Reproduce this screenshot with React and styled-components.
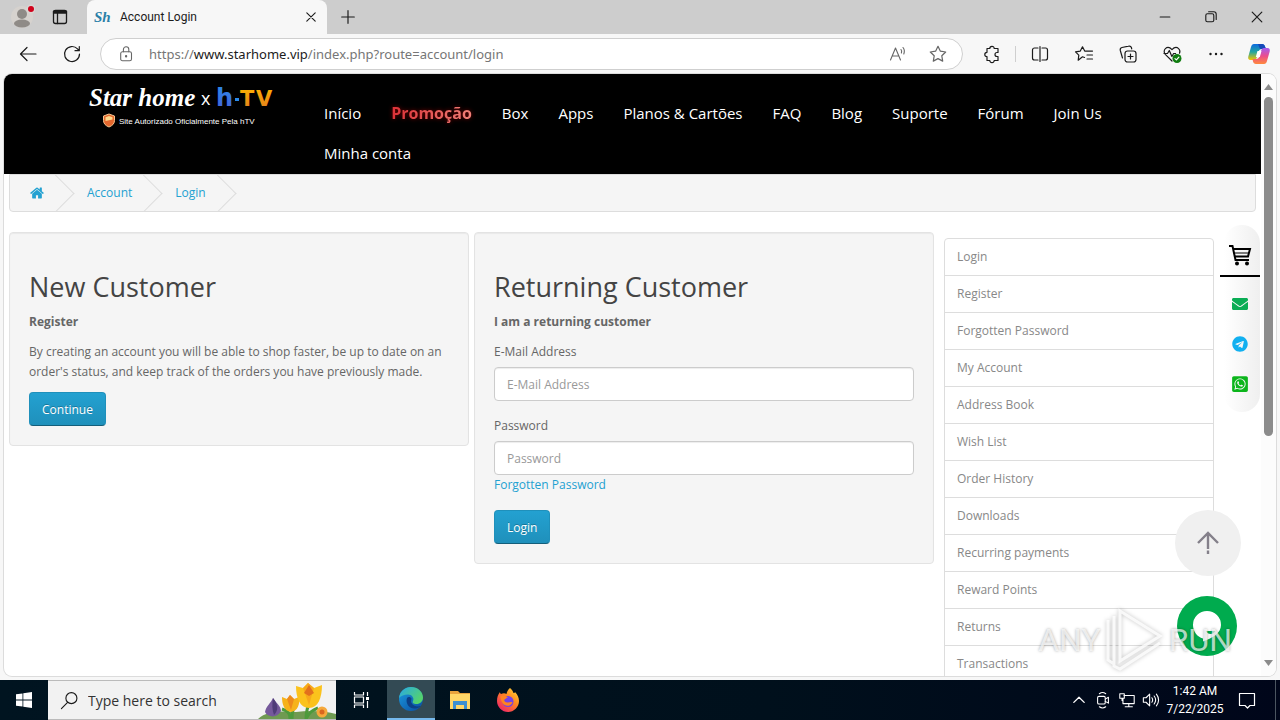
import React from "react";
import styled, { createGlobalStyle, css } from "styled-components";
import { FaEnvelope, FaTelegram, FaWhatsappSquare } from "react-icons/fa";

const Color = {
  LINK: "#23a1d1",
  TEXT: "#666",
  MUTED: "#888",
  HEADING: "#444",
  PANEL: "#f5f5f5",
  BORDER: "#ddd",
  CHROME: "#f7f7f7",
  STRIP: "#cdcdcd",
  TASKBAR: "#001420",
};

const UI_FONT = `"Open Sans", "Noto Sans", sans-serif`;

const GlobalStyle = createGlobalStyle`
  * {
    box-sizing: border-box;
  }

  body {
    margin: 0;
    font-family: ${UI_FONT};
    font-size: 12px;
    line-height: 20px;
    color: ${Color.TEXT};
  }

  a {
    color: ${Color.LINK};
    text-decoration: none;
  }

  button,
  input {
    font-family: inherit;
  }

  svg {
    display: block;
    flex: none;
  }
`;

const Desktop = styled.div`
  display: flex;
  flex-direction: column;
  height: 100vh;
  overflow: hidden;
  background: ${Color.CHROME};
`;

/* ---------- browser chrome ---------- */

const IconButton = styled.button`
  display: flex;
  align-items: center;
  justify-content: center;
  flex: none;
  width: ${({ $width }) => $width || 44}px;
  height: 32px;
  padding: 0;
  border: 0;
  background: none;
  color: ${({ $color }) => $color || "#1b1b1b"};
`;

const TabStrip = styled.div`
  display: flex;
  align-items: center;
  flex: none;
  height: 34px;
  padding-left: 3px;
  background: ${Color.STRIP};
`;

const Tab = styled.div`
  display: flex;
  align-items: center;
  align-self: stretch;
  width: 240px;
  margin-left: 8px;
  padding: 0 4px 0 7px;
  border-radius: 8px 8px 0 0;
  background: ${Color.CHROME};
  color: #1b1b1b;
  font-family: Roboto, sans-serif;
`;

const Favicon = styled.span`
  width: 26px;
  color: #2b80a8;
  font: italic bold 15px "Liberation Serif", serif;
`;

const TabTitle = styled.span`
  flex: 1;
`;

const WindowButtons = styled.div`
  display: flex;
  margin-left: auto;
`;

const Toolbar = styled.div`
  display: flex;
  align-items: center;
  flex: none;
  height: 40px;
  padding-left: 6px;
`;

const AddressBar = styled.div`
  display: flex;
  align-items: center;
  flex: 1;
  height: 32px;
  margin: 0 7px 0 6px;
  padding: 0 4px;
  border: 1px solid #cfcfcf;
  border-radius: 16px;
  background: #fff;
`;

const Url = styled.div`
  flex: 1;
  color: #767676;
  font-family: "Noto Sans", sans-serif;
  font-size: 13px;

  b {
    font-weight: 400;
    color: #1b1b1b;
  }
`;

const Separator = styled.div`
  width: 1px;
  height: 16px;
  margin: 0 2px 0 1px;
  background: #cfcfcf;
`;

/* ---------- page ---------- */

const Frame = styled.div`
  position: relative;
  display: flex;
  flex: 1;
  min-height: 0;
  margin: 0 4px 4px;
  border-radius: 8px;
  box-shadow: 0 0 0 1px #dcdcdc;
  background: #fff;
  overflow: hidden;
`;

const Site = styled.div`
  flex: 1;
  min-width: 0;
  overflow: hidden;
`;

const Header = styled.header`
  display: flex;
  align-items: flex-start;
  padding-right: 60px;
  background: #000;
`;

const Brand = styled.a`
  flex: none;
  width: 305px;
  padding: 6px 0 0 80px;
`;

const Nav = styled.nav`
  display: flex;
  flex-wrap: wrap;
  padding: 19px 0 1px;
`;

const NavLink = styled.a`
  padding: 0 15px;
  color: #fff;
  font-size: 15px;
  line-height: 40px;

  ${({ $promo }) =>
    $promo &&
    css`
      font-size: 16px;
      font-weight: 700;

      span {
        background: linear-gradient(90deg, #dc3036, #f08078);
        background-clip: text;
        color: transparent;
        filter: drop-shadow(0 0 2px rgba(190, 0, 0, 0.6));
      }
    `}
`;

const Breadcrumb = styled.ul`
  display: flex;
  gap: 3px;
  margin: 0 5px 20px;
  padding: 8px 0;
  border: 1px solid ${Color.BORDER};
  border-radius: 0 0 4px 4px;
  background: ${Color.PANEL};
  list-style: none;
  overflow: hidden;
`;

const Crumb = styled.li`
  position: relative;
  display: flex;
  align-items: center;
  height: 20px;
  padding: 0 20px;

  &:after {
    content: "";
    position: absolute;
    top: -3px;
    right: -5px;
    width: 26px;
    height: 26px;
    border-right: 1px solid ${Color.BORDER};
    border-bottom: 1px solid ${Color.BORDER};
    transform: rotate(-45deg);
  }
`;

const Main = styled.main`
  display: flex;
  align-items: flex-start;
  margin: 0 47px 0 5px;
`;

const Well = styled.section`
  flex: 1;
  margin-right: ${({ $gap }) => $gap}px;
  padding: 19px;
  border: 1px solid #e3e3e3;
  border-radius: 4px;
  background: ${Color.PANEL};
  box-shadow: inset 0 1px 1px rgba(0, 0, 0, 0.05);

  h2 {
    margin: 20px 0 10px;
    color: ${Color.HEADING};
    font-size: 27px;
    font-weight: 400;
    line-height: 30px;
  }

  p {
    margin: 0 0 10px;
  }
`;

const Field = styled.div`
  margin-bottom: 15px;

  label {
    display: block;
    margin-bottom: 5px;
  }

  a {
    display: block;
  }
`;

const Input = styled.input`
  display: block;
  width: 100%;
  height: 34px;
  padding: 6px 12px;
  border: 1px solid #ccc;
  border-radius: 4px;
  background: #fff;
  box-shadow: inset 0 1px 1px rgba(0, 0, 0, 0.075);
  font-size: 12px;

  &::placeholder {
    color: #999;
    opacity: 1;
  }
`;

const PrimaryButton = styled.button`
  display: block;
  height: 34px;
  padding: 0 12px;
  border: 1px solid #1f90bb;
  border-bottom-color: #145e7a;
  border-radius: 4px;
  background: linear-gradient(#23a1d1, #1f90bb);
  color: #fff;
  font-size: 12px;
  text-shadow: 0 -1px 0 rgba(0, 0, 0, 0.25);
`;

const AccountMenu = styled.nav`
  display: flex;
  flex-direction: column;
  flex: none;
  width: 270px;
  margin-top: 6px;
  border: 1px solid ${Color.BORDER};
  border-radius: 4px;
`;

const AccountLink = styled.a`
  padding: 8px 12px;
  color: ${Color.MUTED};

  & + & {
    border-top: 1px solid ${Color.BORDER};
  }
`;

const Scrollbar = styled.div`
  display: flex;
  flex-direction: column;
  align-items: center;
  flex: none;
  width: 15px;
  padding: 10px 0;
  background: #fcfcfc;
`;

const ScrollTrack = styled.div`
  flex: 1;
  width: 9px;
  margin: 7px 0;
`;

const ScrollThumb = styled.div`
  height: 61%;
  border-radius: 5px;
  background: #8b8b8b;
`;

const ContactRail = styled.aside`
  position: absolute;
  top: 151px;
  right: 16px;
  display: flex;
  flex-direction: column;
  align-items: flex-end;
  width: 36px;
  padding-bottom: 8px;
  border-radius: 18px;
  background: linear-gradient(90deg, #fff, #efefef);
`;

const RailLink = styled.a`
  display: flex;
  align-items: center;
  justify-content: center;
  width: 40px;
  height: 40px;
  color: ${({ $color }) => $color};
`;

const CartLink = styled(RailLink)`
  height: 52px;
  margin-bottom: 7px;
  padding-top: 10px;
  border-bottom: 2px solid #000;
`;

const RoundButton = styled.button`
  position: absolute;
  right: ${({ $right }) => $right}px;
  bottom: ${({ $bottom }) => $bottom}px;
  display: flex;
  align-items: center;
  justify-content: center;
  width: ${({ $size }) => $size}px;
  height: ${({ $size }) => $size}px;
  padding: 0;
  border: 0;
  border-radius: 50%;
  background: ${({ $background }) => $background};
`;

const Watermark = styled.div`
  position: absolute;
  right: 44px;
  bottom: 4px;
  display: flex;
  align-items: center;
  gap: 4px;
  color: rgba(255, 255, 255, 0.7);
  font: 32px Roboto, sans-serif;
  text-shadow: 0 0 3px rgba(0, 0, 0, 0.35);
  pointer-events: none;

  svg {
    filter: drop-shadow(0 0 2px rgba(0, 0, 0, 0.3));
  }
`;

/* ---------- taskbar ---------- */

const Taskbar = styled.footer`
  display: flex;
  align-items: center;
  flex: none;
  height: 40px;
  background: linear-gradient(90deg, ${Color.TASKBAR}, #00101c 60%, #00061a);
  color: #fff;
`;

const TaskButton = styled(IconButton)`
  height: 40px;
  color: #fff;

  ${({ $active }) =>
    $active &&
    css`
      border-bottom: 2px solid #76b9ed;
      background: #334a54;
    `}
`;

const SearchBox = styled.label`
  display: flex;
  align-items: center;
  align-self: stretch;
  width: 288px;
  padding-left: 12px;
  border-top: 1px solid #bbb;
  border-bottom: 1px solid #bbb;
  background: #f2f2f2;
  color: #1b1b1b;

  input {
    flex: 1;
    min-width: 0;
    margin-left: 9px;
    padding: 0;
    border: 0;
    background: none;
    font-size: 14px;
  }

  input::placeholder {
    color: #333;
    opacity: 1;
  }
`;

const Tray = styled.div`
  display: flex;
  align-items: center;
  margin-left: auto;
`;

const Clock = styled.div`
  width: 64px;
  font-family: Roboto, sans-serif;
  line-height: 18px;
  text-align: center;
`;

const ShowDesktop = styled.button`
  align-self: stretch;
  width: 5px;
  height: 40px;
  margin-left: 8px;
  padding: 0;
  border: 0;
  border-left: 1px solid #4b5560;
  background: none;
`;

/* ---------- drawings ---------- */

const Line = ({ size = 20, width = 1.2, children, ...rest }) => (
  <svg
    width={size}
    height={size}
    viewBox="0 0 20 20"
    fill="none"
    stroke="currentColor"
    strokeWidth={width}
    strokeLinecap="round"
    strokeLinejoin="round"
    {...rest}
  >
    {children}
  </svg>
);

const STAR =
  "M10 2.3l2.4 4.9 5.3.8-3.9 3.8.9 5.3-4.7-2.5-4.7 2.5.9-5.3L2.300 8l5.300-.8z";

const AvatarIcon = () => (
  <svg width="26" height="26" viewBox="0 0 26 26">
    <circle cx="13" cy="13" r="11" fill="#d6d2ce" />
    <circle cx="13" cy="10" r="5" fill="#8f8b87" />
    <ellipse cx="13" cy="19.500" rx="8" ry="4" fill="#8f8b87" />
    <circle cx="22" cy="5" r="4.500" fill="#d9d5d2" />
    <circle cx="22" cy="5" r="3" fill="#d0021b" />
  </svg>
);

const WorkspaceIcon = () => (
  <Line size={20} width={1.3}>
    <rect x="3.500" y="3.500" width="13" height="13" rx="2" />
    <path d="M3.500 6h13M7.500 6v10.500" />
    <path d="M4 4.800h12" strokeWidth="2.400" />
  </Line>
);

const CopilotIcon = () => (
  <svg width="24" height="24" viewBox="0 0 24 24">
    <defs>
      <linearGradient id="copA" x1="0" y1="0" x2="0" y2="1">
        <stop offset="0" stopColor="#0d6ae0" />
        <stop offset=".5" stopColor="#22a6a0" />
        <stop offset="1" stopColor="#f5c400" />
      </linearGradient>
      <linearGradient id="copB" x1="0" y1="1" x2="0" y2="0">
        <stop offset="0" stopColor="#ff8a3c" />
        <stop offset=".5" stopColor="#ec4c8c" />
        <stop offset="1" stopColor="#a45cf0" />
      </linearGradient>
    </defs>
    <path
      d="M7 2h8c1.800 0 2.500 1 3 2.500L19 7h-4c-2 0-3 1-3.600 3l-1.600 5.500C9.300 17 8.500 18 7 18H3.500C1.500 18 .8 16.500 1.300 14.500L4 5c.5-2 1.500-3 3-3z"
      fill="url(#copA)"
    />
    <path d="M11 2h4c1.800 0 2.500 1 3 2.500L19 7h-6z" fill="#1549b8" />
    <path
      d="M17 22H9c-1.800 0-2.500-1-3-2.500L5.500 17H9c2 0 3-1 3.600-3l1.600-5.500C14.700 7 15.500 6 17 6h3.500c2 0 2.700 1.500 2.200 3.500L20 19c-.5 2-1.500 3-3 3z"
      fill="url(#copB)"
    />
    <path d="M10.500 9h4l-1.700 6h-4z" fill="#fff" />
  </svg>
);

const HealthIcon = () => (
  <Line>
    <path d="M10 17L3.500 10.600C1.700 8.700 1.800 6 3.400 4.600 5.200 3 7.800 3.300 10 5.600c2.200-2.300 4.800-2.600 6.600-1 1.300 1.200 1.600 3 .9 4.600" />
    <path d="M2 9.500h3.500l1.800-3 2.600 6 1.700-3h2" />
    <circle cx="15" cy="14.500" r="4.500" fill="#107c10" stroke="none" />
    <path d="M13 14.600l1.400 1.300 2.500-2.700" stroke="#fff" />
  </Line>
);

const Logo = () => (
  <svg width="196" height="50" viewBox="0 0 196 50" role="img" aria-label="Star home x hTV">
    <defs>
      <linearGradient id="blue" x1="0" y1="0" x2="0" y2="1">
        <stop offset="0" stopColor="#2a8ae8" />
        <stop offset="1" stopColor="#4a5fd8" />
      </linearGradient>
      <linearGradient id="gold" x1="0" y1="0" x2="0" y2="1">
        <stop offset="0" stopColor="#ffb400" />
        <stop offset="1" stopColor="#e07a20" />
      </linearGradient>
    </defs>
    <text x="5" y="26" fill="#fff" fontFamily="Liberation Serif, serif" fontStyle="italic" fontWeight="700" fontSize="25">
      Star home
    </text>
    <text x="117" y="25" fill="#fff" fontFamily="Open Sans, sans-serif" fontSize="18">
      x
    </text>
    <text x="132" y="26" fill="url(#blue)" fontFamily="DejaVu Sans, sans-serif" fontWeight="700" fontSize="24">
      h
    </text>
    <rect x="151" y="18" width="4" height="3" fill="#2a8ae8" />
    <text x="156" y="26" fill="url(#gold)" fontFamily="DejaVu Sans, sans-serif" fontWeight="700" fontSize="21">
      T
    </text>
    <text x="172" y="26" fill="url(#gold)" fontFamily="DejaVu Sans, sans-serif" fontWeight="700" fontSize="21">
      V
    </text>
    <path d="M25 34l5.500 2v4.500c0 3-2 5.200-5.500 6.500-3.500-1.300-5.500-3.500-5.500-6.500V36z" fill="#e4672e" stroke="#f6c58f" />
    <path d="M25 36l3.500 1.200v2.300L21.500 41v-3.800z" fill="#ffd98a" />
    <text x="35" y="44" fill="#fff" fontFamily="Liberation Sans, sans-serif" fontSize="8">
      Site Autorizado Oficialmente Pela hTV
    </text>
  </svg>
);

const HomeIcon = () => (
  <svg width="14" height="14" viewBox="64 64 1664 1664" fill="currentColor">
    <path d="M1472 992v480q0 26-19 45t-45 19h-384v-384h-256v384h-384q-26 0-45-19t-19-45v-480q0-1 .5-3t.5-3l575-474 575 474q1 2 1 6zm223-69l-62 74q-8 9-21 11h-3q-13 0-21-7l-692-577-692 577q-12 8-24 7-13-2-21-11l-62-74q-8-10-7-23.500t11-21.500l719-599q32-26 76-26t76 26l244 204v-195q0-14 9-23t23-9h192q14 0 23 9t9 23v408l219 182q10 8 11 21.500t-7 23.500z" />
  </svg>
);

const CartIcon = () => (
  <svg width="24" height="24" viewBox="0 0 24 24" fill="none" stroke="currentColor" strokeWidth="2">
    <path d="M1 3h3.500l3 14h13.500" />
    <path d="M5.300 6H22l-2 7.500H7" />
    <path d="M6.500 10H21" strokeWidth="1.200" />
    <circle cx="9" cy="20.500" r="2" fill="currentColor" stroke="none" />
    <circle cx="19" cy="20.500" r="2" fill="currentColor" stroke="none" />
  </svg>
);

const UpIcon = () => (
  <svg width="24" height="26" viewBox="0 0 24 26" fill="none" stroke="#84808a" strokeWidth="2.400">
    <path d="M2 13L12 3l10 10M12 3v16M12 20.500v3.500" />
  </svg>
);

const ChatIcon = () => (
  <svg width="30" height="34" viewBox="0 0 30 34">
    <path d="M15 2a14 14 0 0 1 14 14c0 8-8 13-18 16.500V29.500C5 28 1 22 1 16A14 14 0 0 1 15 2z" fill="#fff" />
    <path d="M14 22h9.500c-1.500 2-3 3-5 3s-3.700-1-4.500-3z" fill="#00ab4e" />
  </svg>
);

const PlayMark = () => (
  <svg width="60" height="64" viewBox="0 0 60 64" fill="none" stroke="rgba(255,255,255,.8)" strokeWidth="3">
    <path d="M15 3l40 25-40 25z" />
    <path d="M9 8v50l6 3 40-26M3 12v40l6 4" />
  </svg>
);

const WindowsIcon = () => (
  <svg width="16" height="16" viewBox="0 0 16 16" fill="currentColor">
    <path d="M0 2.300L6.500 1.400v6.200H0zM7.300 1.300L16 0v7.600H7.300zM0 8.400h6.500v6.200L0 13.700zM7.300 8.400H16V16l-8.700-1.300z" />
  </svg>
);

const Flowers = () => (
  <svg width="78" height="38" viewBox="0 0 78 38">
    <path d="M0 38c8-8 24-8 38-7 14-2 30-1 40 2v5z" fill="#6f9a51" />
    <path d="M32 38c0-6-2-8-8-10M34 38c0-8 1-10 4-14M48 38c0-8 2-14 5-18M48 38c3-7 7-9 12-11" stroke="#4d9a3c" strokeWidth="3" fill="none" />
    <path d="M7 31C8 25 13 22 15 17c3 5 8 8 8 13-3 7-13 7-16 1z" fill="#75599b" />
    <path d="M15 17c-1 6-1 12 1 17 5-5 4-11-1-17z" fill="#4f3c78" />
    <path d="M24 16l5 2 3-4 4 4 5-2c1 7-1 14-8 15-7-1-9-8-9-15z" fill="#f6b21a" />
    <path d="M29 18l3-4 4 4-3 11z" fill="#ed8a1c" />
    <path d="M38 5l7 2 5-5 6 5 8-3c0 13-4 23-13 23S38 17 38 5z" fill="#fbc21c" />
    <path d="M45 7l5-5 6 5-5 17z" fill="#f7a81a" />
    <path d="M46 12l5-8 5 8-5 3z" fill="#e2701d" />
    <circle cx="64" cy="31" r="5.500" fill="#f5a93b" />
    <circle cx="64" cy="31" r="2.500" fill="#d9661f" />
  </svg>
);

const TaskViewIcon = () => (
  <Line size={20} strokeLinecap="butt">
    <path d="M2.500 2v3h9V2M2.500 18v-3h9v3" />
    <rect x="2.500" y="7" width="9" height="6" />
    <path d="M15.500 2v4M15.500 11v7" />
    <path d="M14 8.500h3" strokeWidth="3" />
  </Line>
);

const EdgeIcon = () => (
  <svg width="26" height="26" viewBox="0 0 26 26">
    <defs>
      <linearGradient id="edgeTop" x1="0" y1="0" x2="1" y2=".6">
        <stop offset="0" stopColor="#28a8e8" />
        <stop offset="1" stopColor="#55d36a" />
      </linearGradient>
      <linearGradient id="edgeLow" x1="0" y1="0" x2="1" y2="1">
        <stop offset="0" stopColor="#1b9de2" />
        <stop offset="1" stopColor="#0a4a9e" />
      </linearGradient>
    </defs>
    <circle cx="13" cy="13" r="12" fill="url(#edgeLow)" />
    <path d="M1 12C2 5 7 1 13 1c7 0 12 5 12 10.500 0 4-3 6.500-6.500 6.500-3 0-4.500-1-3.500-3 1.500-3-1-6.500-5-6.500-4 0-7 1.500-9 3.500z" fill="url(#edgeTop)" />
    <path d="M9 12c-2 6 3 11 8 10.500 2.500 0 4.500-1 6-2.500-4 1-8 0-9.500-3-1-2 0-3 0-4.500-1-2-3.500-2-4.500-.5z" fill="#0c3f86" />
  </svg>
);

const FolderIcon = () => (
  <svg width="22" height="20" viewBox="0 0 22 20">
    <path d="M1 1h8l2 2h10v4H1z" fill="#e8a33d" />
    <path d="M1 4h20v15H1z" fill="#ffd667" />
    <path d="M4 11h14v8h-3v-4H7v4H4z" fill="#3c8fd0" />
  </svg>
);

const FirefoxIcon = () => (
  <svg width="24" height="24" viewBox="0 0 24 24">
    <defs>
      <linearGradient id="fox" x1="1" y1="0" x2="0.200" y2="1">
        <stop offset="0" stopColor="#ffe23d" />
        <stop offset=".45" stopColor="#ff8a1f" />
        <stop offset="1" stopColor="#f0206a" />
      </linearGradient>
    </defs>
    <path d="M14 0c2 2 3 3 3.500 5 1 0 1.500-.5 1.500-1 2.500 2.500 4 5.500 4 9 0 6-5 11-11 11S1 19 1 13c0-4 1-6.500 3-9 0 1 .3 1.500 1 2 2-1 4-1 5.500 0C11 3.500 12 1.500 14 0z" fill="url(#fox)" />
    <circle cx="12" cy="13.500" r="5.500" fill="#7542e5" />
    <path d="M4.500 8C8 6.500 10 8 12 9.500c-2 .3-2 1.500-3.500 2-1 1.500 1 3.500 3.500 3 2-.4 3-1 4.500 0-1.500 4-7.500 4.500-10 .5C5 13 4.500 10 4.500 8z" fill="#ff8420" />
  </svg>
);

/* ---------- content ---------- */

const navItems = [
  "Início",
  "Promoção",
  "Box",
  "Apps",
  "Planos & Cartões",
  "FAQ",
  "Blog",
  "Suporte",
  "Fórum",
  "Join Us",
  "Minha conta",
];

const accountItems = [
  "Login",
  "Register",
  "Forgotten Password",
  "My Account",
  "Address Book",
  "Wish List",
  "Order History",
  "Downloads",
  "Recurring payments",
  "Reward Points",
  "Returns",
  "Transactions",
];

const BrowserTabs = () => (
  <TabStrip>
    <IconButton $width={38} aria-label="Profile">
      <AvatarIcon />
    </IconButton>
    <IconButton $width={38} aria-label="Workspaces">
      <WorkspaceIcon />
    </IconButton>
    <Tab>
      <Favicon>Sh</Favicon>
      <TabTitle>Account Login</TabTitle>
      <IconButton $width={24} aria-label="Close tab">
        <Line size={14} width={1.600}>
          <path d="M4 4l12 12M16 4L4 16" />
        </Line>
      </IconButton>
    </Tab>
    <IconButton $width={42} aria-label="New tab">
      <Line size={18} width={1.300}>
        <path d="M10 3v14M3 10h14" />
      </Line>
    </IconButton>
    <WindowButtons>
      <IconButton $width={46} aria-label="Minimize">
        <Line size={16} width={1.400}>
          <path d="M4 10h12" />
        </Line>
      </IconButton>
      <IconButton $width={46} aria-label="Restore">
        <Line size={16} width={1.400}>
          <rect x="3.500" y="6" width="10" height="10" rx="2" />
          <path d="M7 3.500h6.500a3 3 0 0 1 3 3V13" />
        </Line>
      </IconButton>
      <IconButton $width={46} aria-label="Close">
        <Line size={16} width={1.500}>
          <path d="M4 4l12 12M16 4L4 16" />
        </Line>
      </IconButton>
    </WindowButtons>
  </TabStrip>
);

const BrowserToolbar = () => (
  <Toolbar>
    <IconButton aria-label="Back">
      <Line>
        <path d="M18 10H2.500M9 3.500L2.500 10 9 16.500" />
      </Line>
    </IconButton>
    <IconButton aria-label="Refresh">
      <Line>
        <path d="M17.500 10a7.500 7.500 0 1 1-2-5.100L17 6.500M17.300 2.500v4.200H13" />
      </Line>
    </IconButton>
    <AddressBar>
      <IconButton $color="#666" aria-label="Site information">
        <Line size={18}>
          <rect x="3" y="7.500" width="12" height="10" rx="2" />
          <path d="M6 7.500V5a3 3 0 0 1 6 0v2.500" />
          <circle cx="9" cy="12.500" r=".7" fill="currentColor" />
        </Line>
      </IconButton>
      <Url>
        https://<b>www.starhome.vip</b>/index.php?route=account/login
      </Url>
      <IconButton $width={40} $color="#666" aria-label="Read aloud">
        <Line width={1.100}>
          <path d="M2.500 16L7.500 4l5 12M4.200 12h6.600M13 5.500c.8 1 .8 2.300.4 3.500M15 3.500c1.500 1.800 1.600 4.300.8 6.500" />
        </Line>
      </IconButton>
      <IconButton $width={40} $color="#666" aria-label="Add to favorites">
        <Line>
          <path d={STAR} />
        </Line>
      </IconButton>
    </AddressBar>
    <IconButton aria-label="Extensions">
      <Line>
        <path d="M5 4.500h2.800a2.200 2.200 0 1 1 4.400 0H16v4h-1a2 2 0 1 0 0 4h1v4h-3.800a2.200 2.200 0 1 1-4.400 0H5v-3.800a2.200 2.200 0 1 1 0-4.400z" />
      </Line>
    </IconButton>
    <Separator />
    <IconButton aria-label="Split screen">
      <Line>
        <path d="M8 4H4.500a2 2 0 0 0-2 2v8a2 2 0 0 0 2 2H8M12 4h3.500a2 2 0 0 1 2 2v8a2 2 0 0 1-2 2H12M10 2.500v15" />
      </Line>
    </IconButton>
    <IconButton aria-label="Favorites">
      <Line>
        <path d="M10.500 13.500L8.500 12.800l-4.300 3.400.6-5.100L1.500 7.900l4.800-.8 2.200-4.300 2.200 4.300h7.800M13 11h5.500M13 15h5.500" />
      </Line>
    </IconButton>
    <IconButton aria-label="Collections">
      <Line>
        <rect x="7" y="7" width="11" height="11" rx="2.500" />
        <path d="M12.500 10v5M10 12.500h5M4.500 14L2.300 6.500a2.500 2.500 0 0 1 1.700-3l6.500-1.300a2.500 2.500 0 0 1 3 1.600l.2 1" />
      </Line>
    </IconButton>
    <IconButton aria-label="Browser essentials">
      <HealthIcon />
    </IconButton>
    <IconButton aria-label="Settings and more">
      <Line>
        <path d="M4.500 10h.01M10 10h.01M15.500 10h.01" strokeWidth="2.400" />
      </Line>
    </IconButton>
    <IconButton $width={42} aria-label="Copilot">
      <CopilotIcon />
    </IconButton>
  </Toolbar>
);

const NewCustomer = () => (
  <Well $gap={5}>
    <h2>New Customer</h2>
    <p>
      <strong>Register</strong>
    </p>
    <p>
      By creating an account you will be able to shop faster, be up to date on
      an order's status, and keep track of the orders you have previously made.
    </p>
    <PrimaryButton type="button">Continue</PrimaryButton>
  </Well>
);

const ReturningCustomer = () => (
  <Well $gap={10}>
    <h2>Returning Customer</h2>
    <p>
      <strong>I am a returning customer</strong>
    </p>
    <form>
      <Field>
        <label htmlFor="input-email">E-Mail Address</label>
        <Input id="input-email" type="text" placeholder="E-Mail Address" />
      </Field>
      <Field>
        <label htmlFor="input-password">Password</label>
        <Input id="input-password" type="password" placeholder="Password" />
        <a href="#forgotten">Forgotten Password</a>
      </Field>
      <PrimaryButton type="button">Login</PrimaryButton>
    </form>
  </Well>
);

const WindowsTaskbar = () => (
  <Taskbar>
    <TaskButton $width={48} aria-label="Start">
      <WindowsIcon />
    </TaskButton>
    <SearchBox>
      <Line size={19}>
        <circle cx="12" cy="7.500" r="5.800" />
        <path d="M8 12l-6.500 6.500" />
      </Line>
      <input type="text" placeholder="Type here to search" aria-label="Search" />
      <Flowers />
    </SearchBox>
    <TaskButton $width={51} aria-label="Task view">
      <TaskViewIcon />
    </TaskButton>
    <TaskButton $width={48} $active aria-label="Edge">
      <EdgeIcon />
    </TaskButton>
    <TaskButton $width={49} aria-label="File Explorer">
      <FolderIcon />
    </TaskButton>
    <TaskButton $width={48} aria-label="Firefox">
      <FirefoxIcon />
    </TaskButton>
    <Tray>
      <TaskButton $width={24} aria-label="Show hidden icons">
        <Line size={16} width={1.600}>
          <path d="M3.500 13L10 6.500l6.500 6.500" />
        </Line>
      </TaskButton>
      <TaskButton $width={24} aria-label="Meet now">
        <Line size={18}>
          <rect x="4" y="6" width="8.500" height="8.500" rx="1.500" />
          <path d="M12.500 9l3.500-2v6.500l-3.500-2M6 3c2-1.500 5-1.500 7 0M6 17.500c2 1.500 5 1.500 7 0" />
        </Line>
      </TaskButton>
      <TaskButton $width={24} aria-label="Network">
        <Line size={18}>
          <path d="M6.500 5H18v9H5.500V9M8 17.500h8M12 14v3.500M2 3h5v5H2zM4.500 8v2.500" />
        </Line>
      </TaskButton>
      <TaskButton $width={24} aria-label="Volume">
        <Line size={18}>
          <path d="M1.500 7.500h3l4-4v13l-4-4h-3zM11 7.500c1 1.500 1 3.500 0 5M13.500 5.500c2 2.700 2 6.300 0 9M16 3.500c3 4 3 9 0 13" />
        </Line>
      </TaskButton>
      <Clock>
        <div>1:42 AM</div>
        <div>7/22/2025</div>
      </Clock>
      <TaskButton $width={40} aria-label="Notifications">
        <Line>
          <path d="M2.500 3.500h15v12H13l-2.500 2.500L8 15.500H2.500z" />
        </Line>
      </TaskButton>
      <ShowDesktop aria-label="Show desktop" />
    </Tray>
  </Taskbar>
);

const App = () => {
  return (
    <Desktop>
      <GlobalStyle />
      <BrowserTabs />
      <BrowserToolbar />
      <Frame>
        <Site>
          <Header>
            <Brand href="#home">
              <Logo />
            </Brand>
            <Nav>
              {navItems.map(item => (
                <NavLink key={item} href="#nav" $promo={item === "Promoção"}>
                  <span>{item}</span>
                </NavLink>
              ))}
            </Nav>
          </Header>

          <Breadcrumb>
            <Crumb>
              <a href="#home" aria-label="Home">
                <HomeIcon />
              </a>
            </Crumb>
            <Crumb>
              <a href="#account">Account</a>
            </Crumb>
            <Crumb>
              <a href="#login">Login</a>
            </Crumb>
          </Breadcrumb>

          <Main>
            <NewCustomer />
            <ReturningCustomer />
            <AccountMenu>
              {accountItems.map(item => (
                <AccountLink key={item} href="#account">
                  {item}
                </AccountLink>
              ))}
            </AccountMenu>
          </Main>
        </Site>

        <Scrollbar>
          <svg width="9" height="6" viewBox="0 0 9 6" fill="#8b8b8b">
            <path d="M4.500 0L9 6H0z" />
          </svg>
          <ScrollTrack>
            <ScrollThumb />
          </ScrollTrack>
          <svg width="9" height="6" viewBox="0 0 9 6" fill="#8b8b8b">
            <path d="M0 0h9L4.500 6z" />
          </svg>
        </Scrollbar>

        <ContactRail>
          <CartLink href="#cart" $color="#000" aria-label="Cart">
            <CartIcon />
          </CartLink>
          <RailLink href="#mail" $color="#0aad55" aria-label="E-mail">
            <FaEnvelope size={16} />
          </RailLink>
          <RailLink href="#telegram" $color="#12b0f0" aria-label="Telegram">
            <FaTelegram size={16} />
          </RailLink>
          <RailLink href="#whatsapp" $color="#0cb51c" aria-label="WhatsApp">
            <FaWhatsappSquare size={18} />
          </RailLink>
        </ContactRail>

        <RoundButton $size={66} $right={35} $bottom={100} $background="#f0f0f0" aria-label="Back to top">
          <UpIcon />
        </RoundButton>
        <RoundButton $size={60} $right={39} $bottom={20} $background="#00ab4e" aria-label="Open chat">
          <ChatIcon />
        </RoundButton>

        <Watermark>
          ANY
          <PlayMark />
          RUN
        </Watermark>
      </Frame>
      <WindowsTaskbar />
    </Desktop>
  );
};

export default App;
